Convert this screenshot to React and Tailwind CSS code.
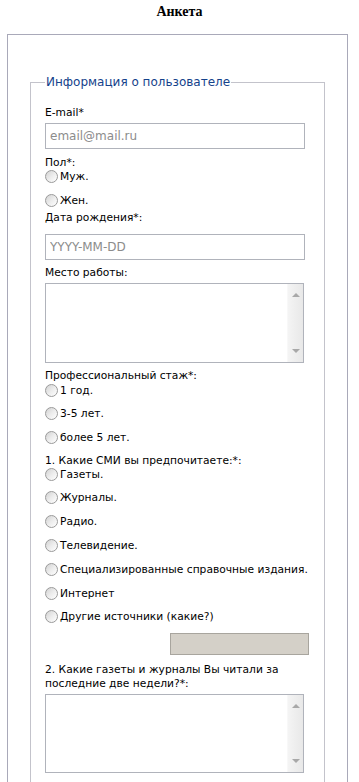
import React from 'react';

const Radio = ({ label, className = '' }) => (
  <label className={`flex items-center h-[13px] ${className}`}>
    <span className="w-[13px] h-[13px] rounded-full border border-[#9a9a9a] bg-gradient-to-br from-[#d2d2d2] via-[#ececec] to-white shrink-0" />
    <span className="ml-[2px] leading-[13px] whitespace-nowrap">{label}</span>
  </label>
);

const FieldLabel = ({ children, className = '' }) => (
  <div className={`leading-[14px] ${className}`}>{children}</div>
);

const TextInput = ({ placeholder, className = '' }) => (
  <input
    type="text"
    placeholder={placeholder}
    className={`block w-[260px] h-[26px] border border-[#b0b3bb] bg-white px-[4px] text-[12px] placeholder:text-[#8c8c8c] outline-none ${className}`}
  />
);

const TextArea = ({ height, className = '' }) => (
  <div className={`flex w-[259px] border border-[#b0b3bb] bg-white ${height} ${className}`}>
    <textarea className="flex-1 resize-none outline-none bg-white" />
    <div className="w-[16px] flex flex-col justify-between items-center bg-gradient-to-r from-[#f4f4f4] to-[#e8e8e8] border-l border-[#f8f8f8] py-[9px]">
      <span className="w-0 h-0 border-l-[4px] border-r-[4px] border-b-[4px] border-l-transparent border-r-transparent border-b-[#a8a8a8]" />
      <span className="w-0 h-0 border-l-[4px] border-r-[4px] border-t-[4px] border-l-transparent border-r-transparent border-t-[#a8a8a8]" />
    </div>
  </div>
);

export default function App() {
  return (
    <div className="w-[359px] bg-white text-black font-['DejaVu_Sans',sans-serif] text-[10.7px]">
      <h1 className="text-center pt-[4px] h-[34px] leading-[16px] font-bold text-[14px] font-['Liberation_Serif',serif]">
        Анкета
      </h1>

      <div className="ml-[7px] w-[341px] h-[760px] border border-[#a9a9b9] px-[22px] pt-[39px]">
        <fieldset className="border border-[#c3c3cb] pl-[14px] pr-[10px] pt-[16px] pb-[20px]">
          <legend className="px-[1px] leading-[16px] text-[12px] text-[#15428b]">
            Информация о пользователе
          </legend>

          <FieldLabel>E-mail*</FieldLabel>
          <TextInput placeholder="email@mail.ru" className="mt-[3px]" />

          <FieldLabel className="mt-[7px]">Пол*:</FieldLabel>
          <Radio label="Муж." />
          <Radio label="Жен." className="mt-[11px]" />

          <FieldLabel className="mt-[4px]">Дата рождения*:</FieldLabel>
          <TextInput placeholder="YYYY-MM-DD" className="mt-[9px]" />

          <FieldLabel className="mt-[6px]">Место работы:</FieldLabel>
          <TextArea height="h-[80px]" className="mt-[3px]" />

          <FieldLabel className="mt-[6px]">Профессиональный стаж*:</FieldLabel>
          <Radio label="1 год." className="mt-[1px]" />
          <Radio label="3-5 лет." className="mt-[10px]" />
          <Radio label="более 5 лет." className="mt-[11px]" />

          <FieldLabel className="mt-[10px]">1. Какие СМИ вы предпочитаете:*:</FieldLabel>
          <Radio label="Газеты." />
          <Radio label="Журналы." className="mt-[10px]" />
          <Radio label="Радио." className="mt-[11px]" />
          <Radio label="Телевидение." className="mt-[11px]" />
          <Radio label="Специализированные справочные издания." className="mt-[11px]" />
          <Radio label="Интернет" className="mt-[11px]" />
          <Radio label="Другие источники (какие?)" className="mt-[10px]" />

          <div className="mt-[10px] ml-[125px] w-[139px] h-[22px] border border-[#a8a59e] bg-[#d4d0c8]" />

          <FieldLabel className="mt-[8px] w-[250px]">
            2. Какие газеты и журналы Вы читали за последние две недели?*:
          </FieldLabel>
          <TextArea height="h-[79px]" className="mt-[3px]" />
        </fieldset>
      </div>
    </div>
  );
}
